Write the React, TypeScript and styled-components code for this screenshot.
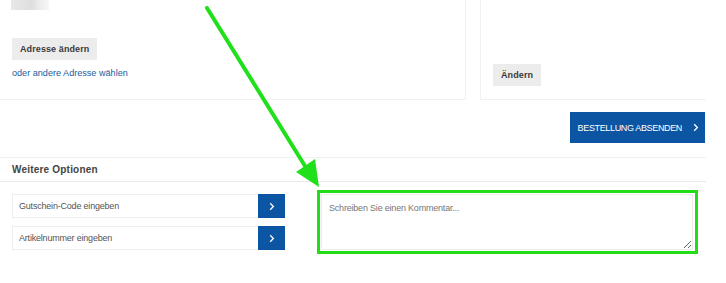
import styled, { createGlobalStyle } from "styled-components";

const GlobalStyle = createGlobalStyle`
    html, body {
        margin: 0;
        padding: 0;
        background: #fff;
        font-family: "Liberation Sans", Arial, sans-serif;
    }
`;

const App = () => {
    return (
        <Page>
            <GlobalStyle/>
            <Main>
                <CardRow>
                    <AddressCard>
                        <Blurred/>
                        <GreyButton>Adresse ändern</GreyButton>
                        <TextLink>oder andere Adresse wählen</TextLink>
                    </AddressCard>
                    <SideCard>
                        <GreyButton>Ändern</GreyButton>
                    </SideCard>
                </CardRow>
                <SubmitRow>
                    <SubmitButton>
                        BESTELLUNG ABSENDEN
                        <Chevron/>
                    </SubmitButton>
                </SubmitRow>
                <OptionsSection>
                    <OptionsTitle>Weitere Optionen</OptionsTitle>
                    <OptionsBody>
                        <InputColumn>
                            <InputGroup>
                                <InputField placeholder="Gutschein-Code eingeben"/>
                                <SquareButton><Chevron/></SquareButton>
                            </InputGroup>
                            <InputGroup>
                                <InputField placeholder="Artikelnummer eingeben"/>
                                <SquareButton><Chevron/></SquareButton>
                            </InputGroup>
                        </InputColumn>
                        <Highlight>
                            <Comment placeholder="Schreiben Sie einen Kommentar..."/>
                        </Highlight>
                    </OptionsBody>
                </OptionsSection>
            </Main>
            <Arrow width="726" height="283" viewBox="0 0 726 283">
                <line x1="207" y1="8" x2="305" y2="166" stroke="#1fe01a" strokeWidth="4" strokeLinecap="round"/>
                <polygon points="296,172 319,187 315,159" fill="#1fe01a"/>
            </Arrow>
        </Page>
    );
}

const Chevron = () => (
    <svg width="6" height="9" viewBox="0 0 6 9">
        <path d="M1.2 1.2 L4.4 4.5 L1.2 7.8" fill="none" stroke="#fff" strokeWidth="1.3"/>
    </svg>
);

export default App;

const Page = styled.div`
    position: relative;
    width: 726px;
    height: 283px;
    overflow: hidden;
`;

const Main = styled.div`
    display: flex;
    flex-direction: column;
    width: 706px;
`;

const CardRow = styled.div`
    display: flex;
    gap: 14px;
    height: 100px;
`;

const AddressCard = styled.div`
    display: flex;
    flex-direction: column;
    align-items: flex-start;
    width: 466px;
    padding-left: 12px;
    box-sizing: border-box;
    border-right: 1px solid #f0f0f0;
    border-bottom: 1px solid #f0f0f0;
`;

const Blurred = styled.div`
    width: 38px;
    height: 10px;
    margin-left: -1px;
    background: linear-gradient(90deg, #e8e8e8 0%, #dedede 55%, #ececec 75%, #f6f6f6 100%);
    filter: blur(0.6px);
`;

const SideCard = styled.div`
    display: flex;
    align-items: flex-end;
    flex: 1;
    padding: 0 0 13px 12px;
    border-left: 1px solid #f0f0f0;
    border-bottom: 1px solid #f0f0f0;
`;

const GreyButton = styled.div`
    display: inline-flex;
    align-items: center;
    height: 22px;
    padding: 0 8px;
    background: #ececec;
    color: #3a3a3a;
    font-size: 9px;
    font-weight: 700;
    letter-spacing: 0.1px;

    ${AddressCard} & {
        margin-top: 28px;
    }
`;

const TextLink = styled.a`
    margin-top: 8px;
    color: #1d5b9e;
    font-size: 9.1px;
    cursor: pointer;
`;

const SubmitRow = styled.div`
    display: flex;
    justify-content: flex-end;
    padding: 12px 1px 14px 0;
`;

const SubmitButton = styled.div`
    display: flex;
    align-items: center;
    gap: 11px;
    height: 31px;
    padding: 0 6px 0 8px;
    background: #0b55a3;
    color: #fff;
    font-size: 9px;
    letter-spacing: -0.35px;
`;

const OptionsSection = styled.div`
    display: flex;
    flex-direction: column;
`;

const OptionsTitle = styled.div`
    display: flex;
    align-items: center;
    height: 23px;
    padding-left: 12px;
    border-top: 1px solid #f0f0f0;
    border-bottom: 1px solid #eaeaea;
    color: #444;
    font-size: 10px;
    font-weight: 700;
    letter-spacing: 0.2px;
`;

const OptionsBody = styled.div`
    display: flex;
    align-items: flex-start;
    gap: 32px;
    padding: 9px 0 0 12px;
`;

const InputColumn = styled.div`
    display: flex;
    flex-direction: column;
    gap: 8px;
    width: 273px;
    padding-top: 3px;
`;

const InputGroup = styled.div`
    display: flex;
    height: 24px;
`;

const InputField = styled.input`
    flex: 1;
    min-width: 0;
    padding: 0 6px;
    border: 1px solid #eeeeee;
    border-right: none;
    outline: none;
    font-family: inherit;
    font-size: 9px;
    letter-spacing: -0.2px;
    color: #444;

    &::placeholder {
        color: #555;
    }
`;

const SquareButton = styled.div`
    display: flex;
    align-items: center;
    justify-content: center;
    width: 27px;
    background: #0b55a3;
`;

const Highlight = styled.div`
    display: flex;
    width: 381px;
    height: 64px;
    border: 3px solid #22dd16;
    box-sizing: border-box;
    margin-top: -1px;
`;

const Comment = styled.textarea`
    flex: 1;
    margin: 1px 2px 1px 1px;
    padding: 8px 7px;
    border: 1px solid #ececec;
    outline: none;
    resize: vertical;
    font-family: inherit;
    font-size: 9px;
    letter-spacing: -0.2px;
    color: #444;

    &::placeholder {
        color: #777;
    }
`;

const Arrow = styled.svg`
    position: absolute;
    top: 0;
    left: 0;
    pointer-events: none;
`;
